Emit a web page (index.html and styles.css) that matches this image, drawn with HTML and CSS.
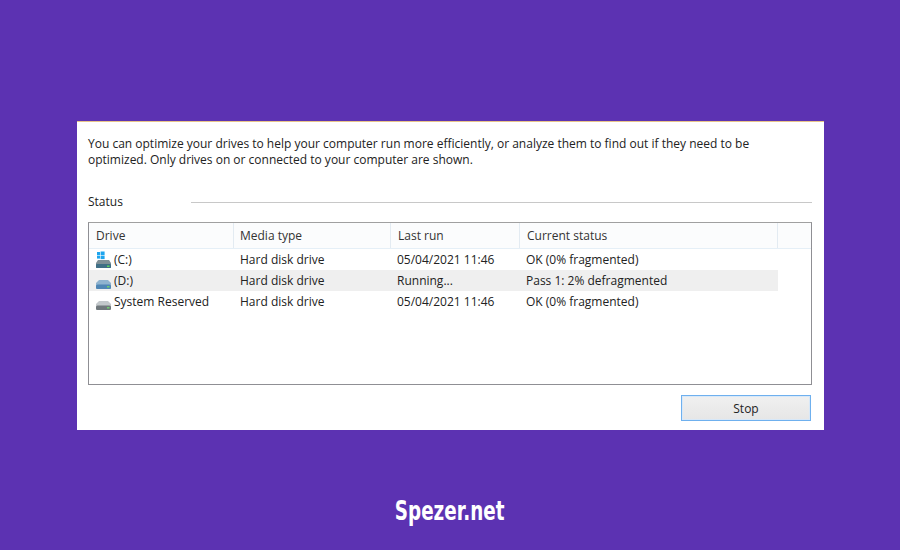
FILE: index.html
```html
<!DOCTYPE html>
<html lang="en">
<head>
<meta charset="utf-8">
<title>Optimize Drives</title>
<link rel="stylesheet" href="styles.css">
</head>
<body>
<main class="page">
  <section class="panel">
    <p class="intro">You can optimize your drives to help your computer run more efficiently, or analyze them to find out if they need to be<br>optimized. Only drives on or connected to your computer are shown.</p>
    <div class="status-head"><span class="status-label">Status</span><span class="status-rule"></span></div>
    <div class="list">
      <div class="row header">
        <div class="cell c1">Drive</div>
        <div class="cell c2">Media type</div>
        <div class="cell c3">Last run</div>
        <div class="cell c4">Current status</div>
        <div class="cell c5"></div>
      </div>
      <div class="row item">
        <div class="cell c1 drive">
          <svg class="icon" width="18" height="18" viewBox="0 0 18 18"><rect x="2" y="1" width="3" height="3" fill="#1ea5ee"/><rect x="5.6" y="0.5" width="4" height="3.5" fill="#1ea5ee"/><rect x="2" y="4.6" width="3" height="3" fill="#1ea5ee"/><rect x="5.6" y="4.6" width="4" height="3.5" fill="#1ea5ee"/><path d="M3 9h11l2 3v5H1v-5z" fill="#7d8f96"/><rect x="1" y="13" width="15" height="4" rx="1" fill="#3f6f86"/><rect x="12" y="14.5" width="2.5" height="1.5" fill="#5ed35e"/></svg>
          <span>(C:)</span>
        </div>
        <div class="cell c2">Hard disk drive</div>
        <div class="cell c3">05/04/2021 11:46</div>
        <div class="cell c4">OK (0% fragmented)</div>
      </div>
      <div class="row item active">
        <div class="cell c1 drive">
          <svg class="icon" width="18" height="18" viewBox="0 0 18 18"><path d="M4 8h9l3 3v5a1 1 0 0 1-1 1H2a1 1 0 0 1-1-1v-5z" fill="#8fb3cf"/><rect x="1" y="12.5" width="15" height="4.5" rx="1.5" fill="#4f86b5"/><rect x="12" y="14" width="2.5" height="1.5" fill="#6ecf6e"/></svg>
          <span>(D:)</span>
        </div>
        <div class="cell c2">Hard disk drive</div>
        <div class="cell c3">Running...</div>
        <div class="cell c4">Pass 1: 2% defragmented</div>
      </div>
      <div class="row item">
        <div class="cell c1 drive">
          <svg class="icon" width="18" height="18" viewBox="0 0 18 18"><path d="M4 8h9l3 3v5a1 1 0 0 1-1 1H2a1 1 0 0 1-1-1v-5z" fill="#c3c8cb"/><rect x="1" y="12.5" width="15" height="4.5" rx="1.5" fill="#70787c"/><rect x="12" y="14" width="2.5" height="1.5" fill="#6ecf6e"/></svg>
          <span>System Reserved</span>
        </div>
        <div class="cell c2">Hard disk drive</div>
        <div class="cell c3">05/04/2021 11:46</div>
        <div class="cell c4">OK (0% fragmented)</div>
      </div>
    </div>
    <div class="actions"><button class="stop" type="button">Stop</button></div>
  </section>
  <footer class="brand"><span class="brand-text">Spezer.net</span></footer>
</main>
</body>
</html>
```
FILE: styles.css
```css
* { box-sizing: border-box; }
html, body { margin: 0; height: 100%; }
body {
  background: #5c32b2;
  font-family: "Open Sans", "Noto Sans", sans-serif;
  font-size: 12px;
  color: #222;
  overflow: hidden;
}
.page {
  width: 900px;
  height: 550px;
  padding-top: 121px;
  padding-left: 77px;
}
.panel {
  width: 747px;
  height: 309px;
  background: #fff;
  border-top: 1px solid #e8c48a;
  padding: 14px 12px 0 11px;
}
.intro {
  margin: 0;
  line-height: 16px;
  width: 720px;
  white-space: nowrap;
}
.status-head {
  display: flex;
  align-items: center;
  margin-top: 25px;
  height: 16px;
}
.status-label { width: 103px; }
.status-rule { flex: 1; height: 1px; background: #c8c8c8; margin-right: 0; margin-top: 2px; }
.list {
  margin-top: 13px;
  width: 724px;
  height: 163px;
  border: 1px solid #8f8f94;
  border-top-color: #a0a0a0;
  box-shadow: inset 0 0 0 0 #fff;
}
.row { display: flex; }
.header {
  height: 26px;
  background: #fbfcfd;
  border-bottom: 1px solid #e5eff7;
  align-items: stretch;
  color: #333;
}
.item { height: 21px; align-items: center; width: 689px; }
.item.active { background: #efefef; }
.cell {
  padding-left: 6px;
  white-space: nowrap;
  display: flex;
  align-items: center;
}
.c1 { width: 145px; }
.c2 { width: 157px; }
.c3 { width: 129px; }
.c4 { width: 258px; }
.c5 { flex: 1; }
.header .cell { border-right: 1px solid #e3ebf2; padding-left: 7px; }
.header .c2 { padding-left: 6px; }
.header .c5 { border-right: 0; }
.drive { padding-left: 6px; gap: 1px; }
.icon { flex: none; }
.item .cell:not(.drive) { padding-left: 6px; }
.actions {
  display: flex;
  justify-content: flex-end;
  margin-top: 10px;
  margin-right: 1px;
}
.stop {
  width: 130px;
  height: 26px;
  font: inherit;
  color: #222;
  background: linear-gradient(#f0f0f0, #e6e6e6);
  border: 1px solid #6fb0ee;
  box-shadow: inset 0 0 0 1px #d8e8f8;
  padding: 0;
}
.brand {
  margin-top: 64px;
  margin-left: -77px;
  display: flex;
  justify-content: center;
}
.brand-text {
  display: inline-block;
  font-family: "DejaVu Sans", sans-serif;
  font-weight: 700;
  font-size: 27px;
  line-height: 34px;
  color: #fff;
  transform: scaleX(0.68);
}
```
